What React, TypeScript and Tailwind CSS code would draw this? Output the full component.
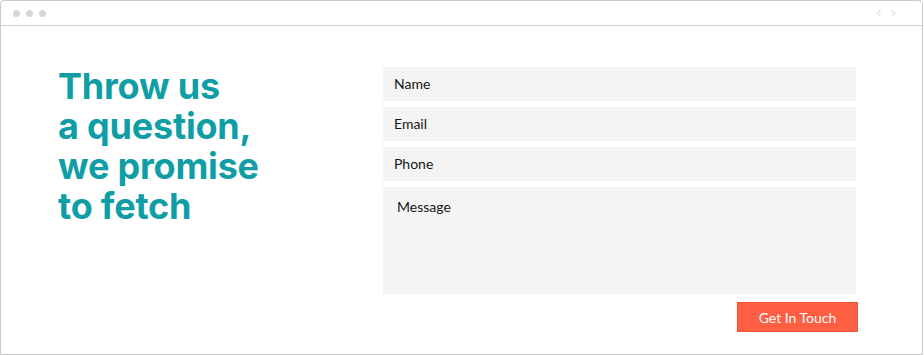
import React from "react";

export default function App() {
  const fields = ["Name", "Email", "Phone"];
  return (
    <div className="w-[924px] h-[355px] bg-white" style={{ fontFamily: "Lato, 'Noto Sans', sans-serif" }}>
      <div className="w-[923px] h-[355px] border border-[#c9c9c9] rounded-t-[4px] flex flex-col overflow-hidden">
        <div className="h-[25px] border-b border-[#cfcfcf] flex items-center justify-between px-[12px] shrink-0">
          <div className="flex items-center gap-[6px]">
            <span className="block w-[7px] h-[7px] rounded-full bg-[#d6d6d6]" />
            <span className="block w-[7px] h-[7px] rounded-full bg-[#d6d6d6]" />
            <span className="block w-[7px] h-[7px] rounded-full bg-[#d6d6d6]" />
          </div>
          <div className="flex items-center gap-[8px] pr-[14px]">
            <svg width="6" height="8" viewBox="0 0 6 8" fill="none">
              <path d="M4.5 0.8 L1.5 4 L4.5 7.2" stroke="#cfcfcf" strokeWidth="1" />
            </svg>
            <svg width="6" height="8" viewBox="0 0 6 8" fill="none">
              <path d="M1.5 0.8 L4.5 4 L1.5 7.2" stroke="#cfcfcf" strokeWidth="1" />
            </svg>
          </div>
        </div>
        <div className="flex flex-1">
          <div className="w-[382px] pl-[57px] pt-[40px] shrink-0">
            <h1
              className="text-[#0f9ea5] font-bold text-[36px] leading-[40px] tracking-[-0.2px]"
              style={{ fontFamily: "Inter, 'Open Sans', sans-serif" }}
            >
              Throw us
              <br />
              a question,
              <br />
              we promise
              <br />
              to fetch
            </h1>
          </div>
          <div className="pt-[41px] w-[475px] flex flex-col">
            <div className="flex flex-col gap-[6px] w-[473px]">
              {fields.map((f) => (
                <div key={f} className="h-[34px] bg-[#f4f4f4] flex items-center pl-[11px] pb-[1px] text-[14px] text-[#161616]">
                  {f}
                </div>
              ))}
              <div className="h-[107px] bg-[#f4f4f4] pl-[14px] pt-[9px] text-[14px] text-[#161616]">
                Message
              </div>
            </div>
            <div className="flex justify-end mt-[8px]">
              <div className="w-[121px] h-[30px] bg-[#fe5e41] border border-[#f25535] text-white text-[14px] flex items-center justify-center">
                Get In Touch
              </div>
            </div>
          </div>
        </div>
      </div>
    </div>
  );
}
